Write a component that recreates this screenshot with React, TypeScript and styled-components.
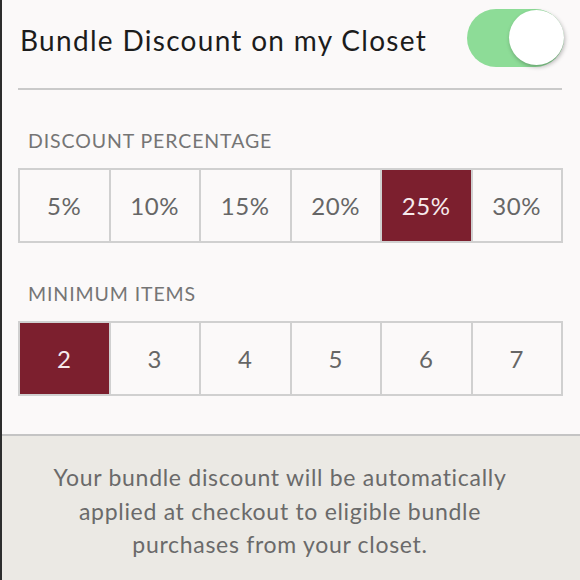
import { FC, useState } from 'react'
import styled, { createGlobalStyle } from 'styled-components'

const GlobalStyle = createGlobalStyle`
  html, body {
    margin: 0;
    padding: 0;
    background: #fbf9f9;
  }
  body {
    font-family: Lato, 'Open Sans', sans-serif;
  }
`

const percentages = [5, 10, 15, 20, 25, 30]
const minimumItems = [2, 3, 4, 5, 6, 7]

interface OptionRowProps {
  options: number[]
  selected: number
  suffix?: string
  onSelect: (value: number) => void
}

// 6つのボタンを横一列に並べる
const OptionRow: FC<OptionRowProps> = ({ options, selected, suffix = '', onSelect }) => (
  <OptionGrid>
    {options.map((value) => (
      <OptionCell
        key={value}
        active={value === selected}
        onClick={() => onSelect(value)}
      >
        {value}
        {suffix}
      </OptionCell>
    ))}
  </OptionGrid>
)

export default function App() {
  const [enabled, setEnabled] = useState(true)
  const [discount, setDiscount] = useState(25)
  const [minItems, setMinItems] = useState(2)

  return (
    <>
      <GlobalStyle />
      <Page>
        <Header>
          <Title>Bundle Discount on my Closet</Title>
          <Switch on={enabled} onClick={() => setEnabled(!enabled)}>
            <Knob on={enabled} />
          </Switch>
        </Header>
        <Divider />

        <SectionLabel>DISCOUNT PERCENTAGE</SectionLabel>
        <OptionRow
          options={percentages}
          selected={discount}
          suffix="%"
          onSelect={setDiscount}
        />

        <SectionLabel>MINIMUM ITEMS</SectionLabel>
        <OptionRow options={minimumItems} selected={minItems} onSelect={setMinItems} />

        <Footer>
          <FooterText>
            Your bundle discount will be automatically
            <br />
            applied at checkout to eligible bundle
            <br />
            purchases from your closet.
          </FooterText>
        </Footer>
      </Page>
    </>
  )
}

const Page = styled.div`
  width: 578px;
  height: 580px;
  border-left: 2px solid #2d2d2d;
  background: #fbf9f9;
  display: flex;
  flex-direction: column;
  overflow: hidden;
`

const Header = styled.div`
  height: 76px;
  display: flex;
  align-items: center;
  justify-content: space-between;
  padding: 0 16px 0 18px;
`

const Title = styled.h1`
  margin: 4px 0 0;
  font-size: 28px;
  font-weight: 400;
  color: #1c1c1c;
  letter-spacing: 1.3px;
`

const Switch = styled.div<{ on: boolean }>`
  position: relative;
  width: 97px;
  height: 58px;
  border-radius: 29px;
  background: ${(props) => (props.on ? '#8ddc97' : '#dcdcdc')};
  cursor: pointer;
`

const Knob = styled.div<{ on: boolean }>`
  position: absolute;
  top: 1px;
  left: ${(props) => (props.on ? '42px' : '1px')};
  width: 55px;
  height: 55px;
  border-radius: 50%;
  background: #ffffff;
  box-shadow: 1px 2px 4px rgba(0, 0, 0, 0.28);
`

const Divider = styled.div`
  height: 2px;
  margin: 12px 18px 0 16px;
  background: #cacaca;
`

const SectionLabel = styled.div`
  padding-left: 26px;
  margin: 40px 0 16px;
  font-size: 19.5px;
  line-height: 22px;
  letter-spacing: 0.9px;
  color: #757575;
`

const OptionGrid = styled.div`
  margin: 0 17px 0 16px;
  display: grid;
  grid-template-columns: repeat(6, 1fr);
  border: 2px solid #d0d0d0;
  background: #d0d0d0;
  gap: 2px;
  height: 75px;
  box-sizing: border-box;
`

const OptionCell = styled.div<{ active: boolean }>`
  display: flex;
  align-items: center;
  justify-content: center;
  font-size: 24px;
  letter-spacing: 0.6px;
  color: ${(props) => (props.active ? '#f6eaec' : '#666666')};
  background: ${(props) => (props.active ? '#7c1f2e' : '#fbf9f9')};
  cursor: pointer;
`

const Footer = styled.div`
  margin-top: 38px;
  flex: 1;
  border-top: 2px solid #c4c4c4;
  background: #ebe9e4;
  padding: 25px 40px 0 18px;
`

const FooterText = styled.p`
  margin: 0;
  text-align: center;
  font-size: 23px;
  line-height: 33.5px;
  letter-spacing: 0.7px;
  color: #6a6a6a;
`
